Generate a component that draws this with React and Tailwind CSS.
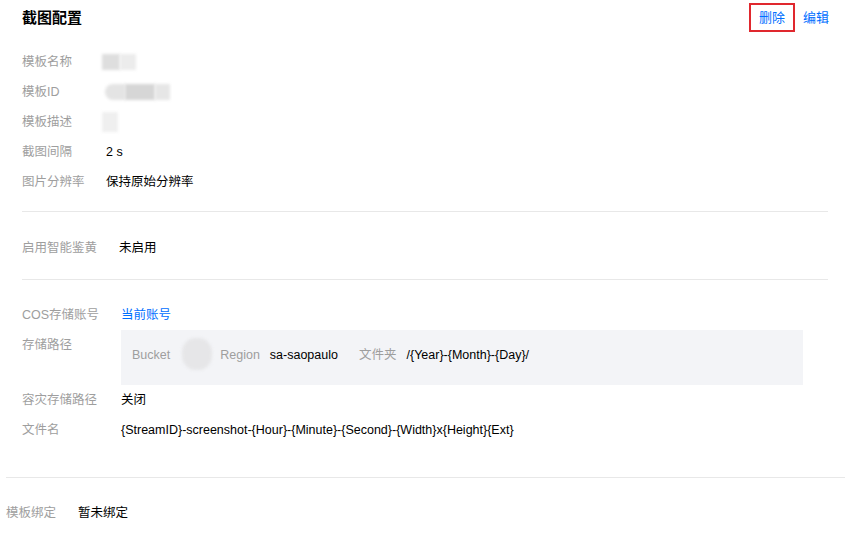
import React from "react";

const font = { fontFamily: '"Liberation Sans", "Noto Sans CJK SC", sans-serif' };

// one label/value line of the detail panel
function Row({ label, labelWidth, children }) {
    return (
        <div className="flex items-center h-[30px]">
            <div className="text-[#9e9e9e] shrink-0" style={{ width: labelWidth }}>{label}</div>
            <div className="text-[#000]">{children}</div>
        </div>
    );
}

function Blur({ className }) {
    return <div className={`blur-[1.5px] ${className}`}></div>;
}

export default function App() {
    return (
        <div className="w-[845px] h-[543px] bg-white text-[12.5px] leading-5 overflow-hidden" style={font}>
            {/* header */}
            <div className="flex items-center justify-between h-[36px] pl-[22px] pr-[16px]">
                <h3 className="font-bold text-[15px] text-[#000]">截图配置</h3>
                <div className="flex items-center">
                    <div className="border-2 border-[#e0282e] h-[29px] w-[46px] flex items-center justify-center mt-[-1px]">
                        <span className="text-[#006eff] text-[13px]">删除</span>
                    </div>
                    <span className="text-[#006eff] text-[13px] ml-[8px]">编辑</span>
                </div>
            </div>

            <div className="pl-[22px] pr-[17px]">
                <div className="mt-[11px]">
                    <Row label="模板名称" labelWidth={84}>
                        <div className="flex -ml-[4px]">
                            <Blur className="w-[18px] h-[16px] bg-[#dedede]" />
                            <Blur className="w-[16px] h-[16px] bg-[#ececec]" />
                        </div>
                    </Row>
                    <Row label="模板ID" labelWidth={84}>
                        <div className="flex -ml-[1px]">
                            <Blur className="w-[20px] h-[16px] bg-[#e4e4e4] rounded-l-full" />
                            <Blur className="w-[30px] h-[16px] bg-[#d6d6d6]" />
                            <Blur className="w-[15px] h-[16px] bg-[#e6e6e6]" />
                        </div>
                    </Row>
                    <Row label="模板描述" labelWidth={84}>
                        <Blur className="-ml-[4px] w-[16px] h-[20px] bg-[#efefef]" />
                    </Row>
                    <Row label="截图间隔" labelWidth={84}>2 s</Row>
                    <Row label="图片分辨率" labelWidth={84}>保持原始分辨率</Row>
                </div>

                <div className="border-t border-[#e8e8e8] mt-[14px]"></div>

                <div className="mt-[21px]">
                    <Row label="启用智能鉴黄" labelWidth={97}>未启用</Row>
                </div>

                <div className="border-t border-[#e8e8e8] mt-[16px]"></div>

                <div className="mt-[20px]">
                    <Row label="COS存储账号" labelWidth={99}>
                        <span className="text-[#006eff]">当前账号</span>
                    </Row>
                    <div className="flex">
                        <div className="text-[#9e9e9e] w-[99px] shrink-0 h-[30px] flex items-center">存储路径</div>
                        <div className="flex-1 mr-[25px] bg-[#f3f4f7] h-[55px] pt-[15px] pl-[11px] flex items-start">
                            <span className="text-[#9e9e9e]">Bucket</span>
                            <Blur className="ml-[12px] -mt-[7px] w-[30px] h-[32px] rounded-[45%] bg-[#e6e6e8]" />
                            <span className="text-[#9e9e9e] ml-[8px]">Region</span>
                            <span className="ml-[10px]">sa-saopaulo</span>
                            <span className="text-[#9e9e9e] ml-[21px]">文件夹</span>
                            <span className="ml-[10px]">/{"{Year}-{Month}-{Day}"}/</span>
                        </div>
                    </div>
                    <Row label="容灾存储路径" labelWidth={99}>关闭</Row>
                    <Row label="文件名" labelWidth={99}>
                        {"{StreamID}-screenshot-{Hour}-{Minute}-{Second}-{Width}x{Height}{Ext}"}
                    </Row>
                </div>
            </div>

            <div className="border-t border-[#e8e8e8] mt-[32px] ml-[6px]"></div>

            <div className="pl-[6px] mt-[20px]">
                <Row label="模板绑定" labelWidth={72}>暂未绑定</Row>
            </div>
        </div>
    );
}
